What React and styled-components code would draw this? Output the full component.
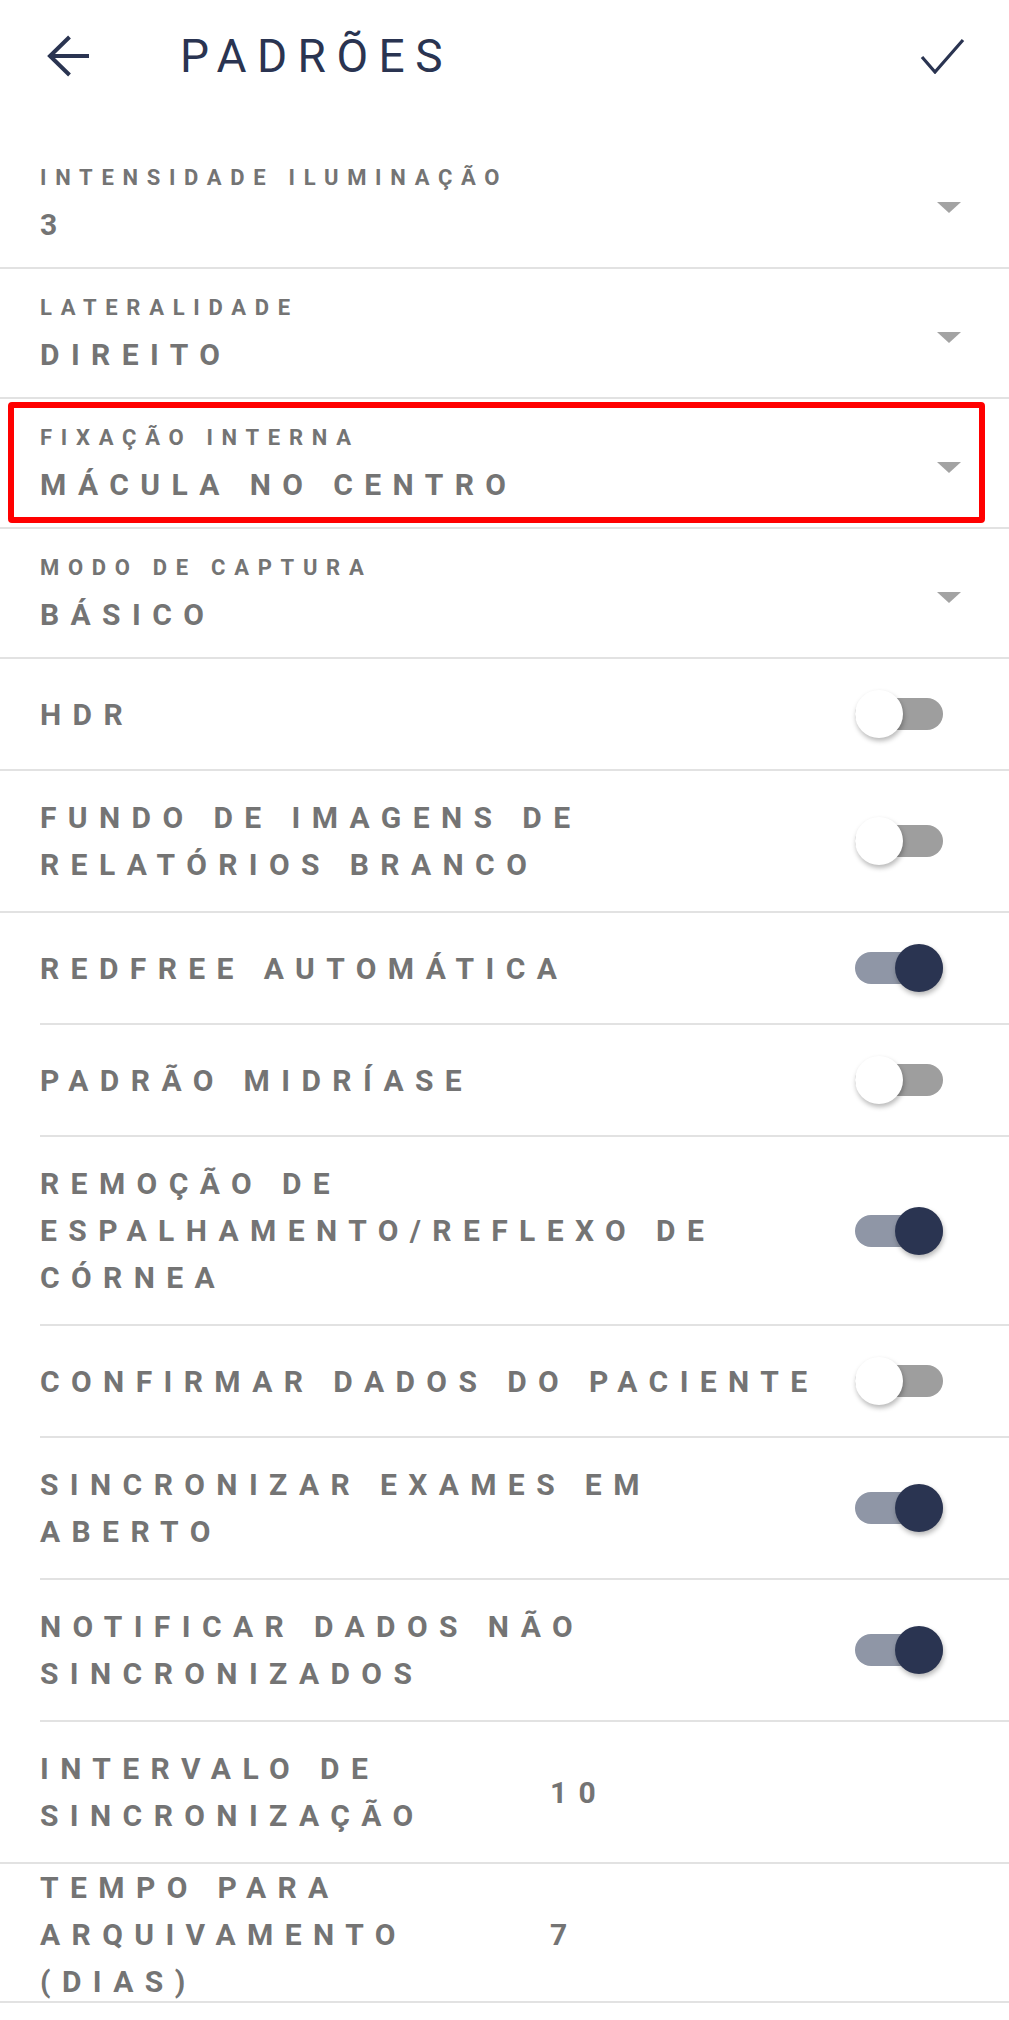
import React from "react";
import styled, { createGlobalStyle, css } from "styled-components";

const GlobalStyle = createGlobalStyle`
  html, body {
    margin: 0;
    padding: 0;
    background: #ffffff;
  }
  body {
    font-family: Roboto, "Noto Sans", "Liberation Sans", sans-serif;
    -webkit-font-smoothing: antialiased;
  }
  * { box-sizing: border-box; }
`;

const NAVY = "#2a3451";
const GRAY = "#747474";
const DIVIDER = "#e2e2e2";

const Page = styled.div`
  width: 1009px;
  min-height: 2020px;
  background: #fff;
  overflow: hidden;
`;

const Header = styled.header`
  height: 112px;
  display: flex;
  align-items: center;
  padding-left: 46px;
  padding-right: 44px;
`;

const IconButton = styled.button`
  border: 0;
  padding: 0;
  background: transparent;
  display: flex;
  align-items: center;
  justify-content: center;
  color: ${NAVY};
  margin-left: ${(p) => (p.$push ? "auto" : "0")};
`;

const Title = styled.h1`
  margin: 0 0 0 90px;
  font-size: 46px;
  font-weight: 400;
  letter-spacing: 10.5px;
  color: ${NAVY};
  line-height: 56px;
`;

const List = styled.div`
  padding-top: 27px;
`;

const SelectRow = styled.div`
  position: relative;
  display: flex;
  align-items: center;
  padding: 24px 48px 22px 40px;
  border-bottom: 2px solid ${DIVIDER};
  ${(p) =>
    p.$highlight &&
    css`
      &::after {
        content: "";
        position: absolute;
        top: 3px;
        left: 8px;
        right: 24px;
        bottom: 4px;
        border: 6px solid #ff0000;
        border-radius: 4px;
        pointer-events: none;
      }
    `}
`;

const SelectText = styled.div`
  flex: 1;
  display: flex;
  flex-direction: column;
`;

const SelectLabel = styled.span`
  font-size: 22px;
  line-height: 30px;
  font-weight: 700;
  letter-spacing: 8.7px;
  color: ${GRAY};
  margin-bottom: 12px;
`;

const SelectValue = styled.span`
  font-size: 30px;
  line-height: 40px;
  font-weight: 700;
  letter-spacing: 11.4px;
  color: ${GRAY};
`;

const Caret = styled.span`
  width: 0;
  height: 0;
  border-left: 12px solid transparent;
  border-right: 12px solid transparent;
  border-top: 11px solid #a3a3a3;
  margin-top: 6px;
`;

const ToggleRow = styled.div`
  display: flex;
  align-items: center;
  gap: 14px;
  min-height: 112px;
  padding: 23px 66px 23px ${(p) => (p.$inset ? "0" : "40px")};
  margin-left: ${(p) => (p.$inset ? "40px" : "0")};
  border-bottom: 2px solid ${DIVIDER};
`;

const RowLabel = styled.div`
  flex: 1;
  font-size: 30px;
  line-height: 47px;
  font-weight: 700;
  letter-spacing: 11.4px;
  color: ${GRAY};
`;

const Switch = styled.div`
  position: relative;
  flex: none;
  width: 88px;
  height: 48px;
  display: flex;
  align-items: center;
`;

const Track = styled.div`
  width: 88px;
  height: 32px;
  border-radius: 16px;
  background: ${(p) => (p.$on ? "#8f96a6" : "#9e9e9e")};
`;

const Thumb = styled.div`
  position: absolute;
  top: 0;
  ${(p) => (p.$on ? "right: 0;" : "left: 0;")}
  width: 48px;
  height: 48px;
  border-radius: 50%;
  background: ${(p) => (p.$on ? NAVY : "#ffffff")};
  box-shadow: 1px 3px 5px rgba(0, 0, 0, 0.28);
`;

const ValueRow = styled.div`
  display: grid;
  grid-template-columns: 470px 1fr;
  column-gap: 40px;
  align-items: center;
  padding: ${(p) => (p.$tight ? "0 40px" : "23px 40px")};
  height: ${(p) => (p.$tight ? "139px" : "auto")};
  border-bottom: 2px solid ${DIVIDER};
`;

const NumberValue = styled.span`
  font-size: 30px;
  font-weight: 700;
  letter-spacing: 11.4px;
  color: ${GRAY};
`;

const BackIcon = () => (
  <svg width="44" height="42" viewBox="0 0 44 42" fill="none">
    <path d="M3 21 H43" stroke="currentColor" strokeWidth="4" />
    <path d="M23.5 2 L4 21 L23.5 40" stroke="currentColor" strokeWidth="4" />
  </svg>
);

const CheckIcon = () => (
  <svg width="46" height="36" viewBox="0 0 46 36" fill="none">
    <path
      d="M3 19 L16 34 L44 2"
      stroke="currentColor"
      strokeWidth="3.2"
      strokeLinejoin="miter"
    />
  </svg>
);

const selects = [
  { label: "INTENSIDADE ILUMINAÇÃO", value: "3" },
  { label: "LATERALIDADE", value: "DIREITO" },
  { label: "FIXAÇÃO INTERNA", value: "MÁCULA NO CENTRO", highlight: true },
  { label: "MODO DE CAPTURA", value: "BÁSICO" },
];

const toggles = [
  { label: "HDR", on: false, inset: false },
  { label: "FUNDO DE IMAGENS DE RELATÓRIOS BRANCO", on: false, inset: false },
  { label: "REDFREE AUTOMÁTICA", on: true, inset: true },
  { label: "PADRÃO MIDRÍASE", on: false, inset: true },
  { label: "REMOÇÃO DE ESPALHAMENTO/REFLEXO DE CÓRNEA", on: true, inset: true },
  { label: "CONFIRMAR DADOS DO PACIENTE", on: false, inset: true },
  { label: "SINCRONIZAR EXAMES EM ABERTO", on: true, inset: true },
  { label: "NOTIFICAR DADOS NÃO SINCRONIZADOS", on: true, inset: true },
];

const values = [
  { label: "INTERVALO DE SINCRONIZAÇÃO", value: "10" },
  { label: "TEMPO PARA ARQUIVAMENTO (DIAS)", value: "7", tight: true },
];

export default function App() {
  return (
    <Page>
      <GlobalStyle />
      <Header>
        <IconButton aria-label="Voltar">
          <BackIcon />
        </IconButton>
        <Title>PADRÕES</Title>
        <IconButton $push aria-label="Confirmar">
          <CheckIcon />
        </IconButton>
      </Header>
      <List>
        {selects.map((s) => (
          <SelectRow key={s.label} $highlight={s.highlight}>
            <SelectText>
              <SelectLabel>{s.label}</SelectLabel>
              <SelectValue>{s.value}</SelectValue>
            </SelectText>
            <Caret />
          </SelectRow>
        ))}
        {toggles.map((t) => (
          <ToggleRow key={t.label} $inset={t.inset}>
            <RowLabel>{t.label}</RowLabel>
            <Switch>
              <Track $on={t.on} />
              <Thumb $on={t.on} />
            </Switch>
          </ToggleRow>
        ))}
        {values.map((v) => (
          <ValueRow key={v.label} $tight={v.tight}>
            <RowLabel>{v.label}</RowLabel>
            <NumberValue>{v.value}</NumberValue>
          </ValueRow>
        ))}
      </List>
    </Page>
  );
}
